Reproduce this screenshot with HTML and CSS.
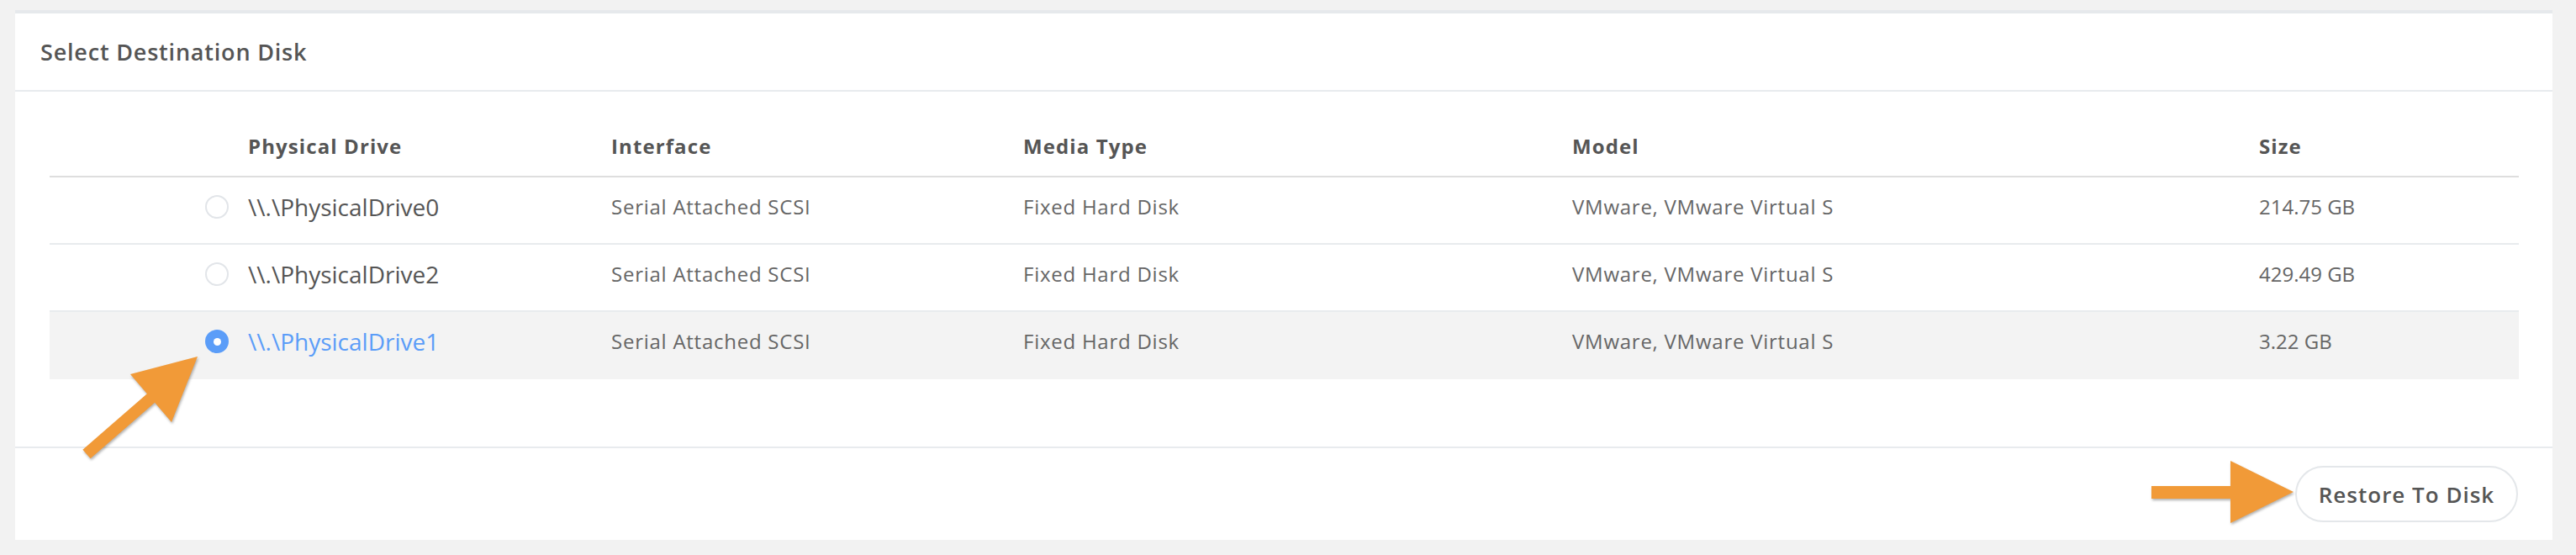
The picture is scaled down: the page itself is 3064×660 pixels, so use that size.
FILE: index.html
```html
<!DOCTYPE html>
<html lang="en">
<head>
<meta charset="utf-8">
<title>Select Destination Disk</title>
<link rel="stylesheet" href="styles.css">
</head>
<body>
<div class="page">
  <section class="card">
    <header class="card-header">Select Destination Disk</header>
    <div class="card-body">
      <div class="table">
        <div class="row head">
          <div class="cell"></div>
          <div class="cell">Physical Drive</div>
          <div class="cell">Interface</div>
          <div class="cell">Media Type</div>
          <div class="cell">Model</div>
          <div class="cell">Size</div>
        </div>
        <div class="row">
          <div class="cell radio-cell"><span class="radio"></span></div>
          <div class="cell drive">\\.\PhysicalDrive0</div>
          <div class="cell">Serial Attached SCSI</div>
          <div class="cell">Fixed Hard Disk</div>
          <div class="cell">VMware, VMware Virtual S</div>
          <div class="cell num">214.75 GB</div>
        </div>
        <div class="row">
          <div class="cell radio-cell"><span class="radio"></span></div>
          <div class="cell drive">\\.\PhysicalDrive2</div>
          <div class="cell">Serial Attached SCSI</div>
          <div class="cell">Fixed Hard Disk</div>
          <div class="cell">VMware, VMware Virtual S</div>
          <div class="cell num">429.49 GB</div>
        </div>
        <div class="row selected">
          <div class="cell radio-cell"><span class="radio checked"></span></div>
          <div class="cell drive">\\.\PhysicalDrive1</div>
          <div class="cell">Serial Attached SCSI</div>
          <div class="cell">Fixed Hard Disk</div>
          <div class="cell">VMware, VMware Virtual S</div>
          <div class="cell num">3.22 GB</div>
        </div>
      </div>
    </div>
    <footer class="card-footer">
      <button class="btn" type="button">Restore To Disk</button>
    </footer>
  </section>
</div>
<svg class="annotations" width="3064" height="660" viewBox="0 0 3064 660" xmlns="http://www.w3.org/2000/svg">
  <polygon class="arrow" points="98.4,534.7 174.9,468.2 155,445 235,424 204,502 184.1,478.8 107.6,545.3"/>
  <polygon class="arrow" points="2559,578 2653,578 2653,548 2728,585 2653,622 2653,593 2559,593"/>
</svg>
</body>
</html>
```

FILE: styles.css
```css
html, body {
  margin: 0;
  padding: 0;
  background: #f2f2f2;
}

body {
  font-family: "Open Sans", "Noto Sans", "Liberation Sans", sans-serif;
  color: #555;
  width: 3064px;
  height: 660px;
  overflow: hidden;
  position: relative;
}

.page {
  padding: 12px 28px 18px 18px;
}

.card {
  background: #fff;
  border-top: 4px solid #e6e9ec;
}

.card-header {
  height: 91px;
  display: flex;
  align-items: center;
  padding-left: 30px;
  font-size: 27px;
  font-weight: 600;
  letter-spacing: 0.8px;
  color: #555;
  border-bottom: 2px solid #e8ebee;
}

.card-body {
  padding: 49px 40px 80px 41px;
}

.row {
  display: grid;
  grid-template-columns: 236px 432px 490px 653px 817px 1fr;
  align-items: center;
  box-sizing: border-box;
  height: 80px;
  padding-bottom: 8px;
  border-bottom: 2px solid #e8ebee;
  font-size: 24px;
  line-height: 32px;
  letter-spacing: 0.75px;
  color: #666;
}

.row.head {
  height: auto;
  padding-bottom: 19px;
  border-bottom-color: #dedede;
  font-weight: 700;
  letter-spacing: 1.1px;
  color: #555;
}

.row.selected {
  background: #f3f3f3;
  border-bottom-color: #f3f3f3;
}

.num {
  letter-spacing: 0;
}

.radio-cell {
  display: flex;
  justify-content: flex-end;
  padding-right: 23px;
}

.radio {
  box-sizing: border-box;
  width: 28px;
  height: 28px;
  border-radius: 50%;
  border: 2px solid #e2e5e9;
  background: #fff;
  display: flex;
  align-items: center;
  justify-content: center;
}

.radio.checked {
  border-color: #5b9df8;
  background: #5b9df8;
}

.radio.checked::after {
  content: "";
  width: 9px;
  height: 9px;
  border-radius: 50%;
  background: #fff;
}

.drive {
  font-size: 28px;
  letter-spacing: 0;
  color: #555;
}

.selected .drive {
  color: #5b9df8;
}

.card-footer {
  border-top: 2px solid #e8ebee;
  height: 109px;
  display: flex;
  align-items: center;
  justify-content: flex-end;
  padding-right: 41px;
}

.btn {
  box-sizing: border-box;
  height: 67px;
  width: 265px;
  border: 2px solid #e4e7ea;
  border-radius: 34px;
  background: #fff;
  font-family: "Open Sans", "Noto Sans", "Liberation Sans", sans-serif;
  font-size: 26px;
  font-weight: 600;
  letter-spacing: 1px;
  color: #555;
  padding: 0;
}

.annotations {
  position: absolute;
  left: 0;
  top: 0;
  pointer-events: none;
}

.arrow {
  fill: #f19a38;
  filter: drop-shadow(1px 2px 1.5px rgba(0, 0, 0, 0.3));
}
```
